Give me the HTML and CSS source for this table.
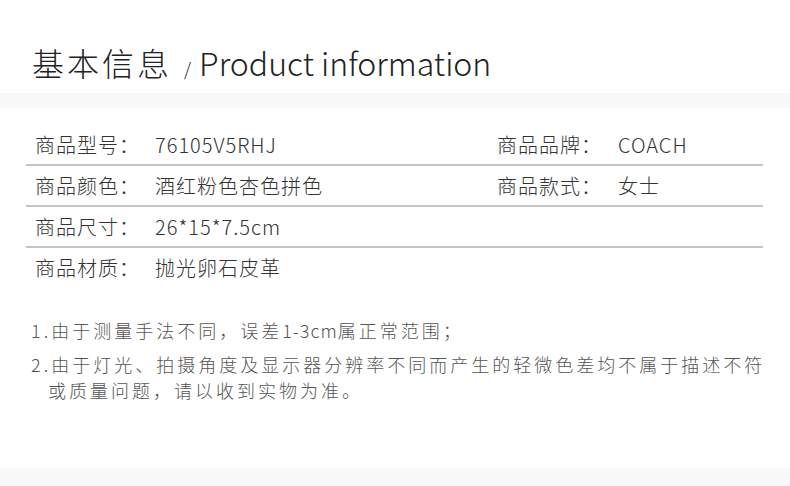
FILE: index.html
```html
<!DOCTYPE html>
<html lang="zh-CN">
<head>
	<meta charset="UTF-8">
	<title>基本信息</title>
	<link rel="stylesheet" href="styles.css">
</head>
<body>
	<div class="page">
		<div class="head">
			<h2>基本信息<span class="slash">/</span><span class="en">Product information</span></h2>
		</div>
		<div class="band"></div>
		<div class="info">
			<div class="row">
				<span class="label">商品型号：</span><span class="value">76105V5RHJ</span>
				<span class="label">商品品牌：</span><span class="value">COACH</span>
			</div>
			<div class="row">
				<span class="label">商品颜色：</span><span class="value">酒红粉色杏色拼色</span>
				<span class="label">商品款式：</span><span class="value">女士</span>
			</div>
			<div class="row">
				<span class="label">商品尺寸：</span><span class="value">26*15*7.5cm</span>
				<span class="label"></span><span class="value"></span>
			</div>
			<div class="row last">
				<span class="label">商品材质：</span><span class="value">抛光卵石皮革</span>
				<span class="label"></span><span class="value"></span>
			</div>
		</div>
		<ul class="notes">
			<li>1.由于测量手法不同，误差<span class="num">1-3cm</span>属正常范围；</li>
			<li>2.由于灯光、拍摄角度及显示器分辨率不同而产生的轻微色差均不属于描述不符或质量问题，请以收到实物为准。</li>
		</ul>
		<div class="band bottom"></div>
	</div>
</body>
</html>
```

FILE: styles.css
```css
* {
	margin: 0;
	padding: 0;
}
body {
	background: #fff;
	font-family: "Noto Sans CJK SC", "Noto Sans", sans-serif;
	color: #333;
}
.page {
	width: 790px;
}
.head {
	height: 93px;
	padding-left: 32px;
	box-sizing: border-box;
	padding-top: 40px;
}
.head h2 {
	font-size: 32px;
	font-weight: 300;
	line-height: 44px;
	letter-spacing: 3px;
	color: #222;
	white-space: nowrap;
}
.head .slash {
	font-size: 18px;
	letter-spacing: 0;
	margin: 0 8px 0 12px;
}
.head .en {
	font-size: 32px;
	letter-spacing: 0;
}
.band {
	height: 15px;
	background: #f8f8f8;
}
.info {
	width: 737px;
	margin: 17px 0 0 26px;
}
.row {
	display: grid;
	grid-template-columns: 129px 342px 121px 1fr;
	height: 39px;
	line-height: 39px;
	border-bottom: 2px solid #c4c4c4;
	font-size: 20px;
	font-weight: 300;
	letter-spacing: 1px;
	white-space: nowrap;
}
.row.last {
	border-bottom: none;
}
.row .label:first-child {
	padding-left: 9px;
}
.notes {
	list-style: none;
	width: 740px;
	height: 151px;
	margin: 30px 0 0 31px;
	font-size: 18px;
	font-weight: 300;
	letter-spacing: 3px;
	color: #555;
	line-height: 26px;
}
.notes .num {
	letter-spacing: 1px;
}
.notes li {
	padding-left: 17px;
	text-indent: -17px;
	margin-bottom: 8px;
}
.band.bottom {
	height: 18px;
}
```
